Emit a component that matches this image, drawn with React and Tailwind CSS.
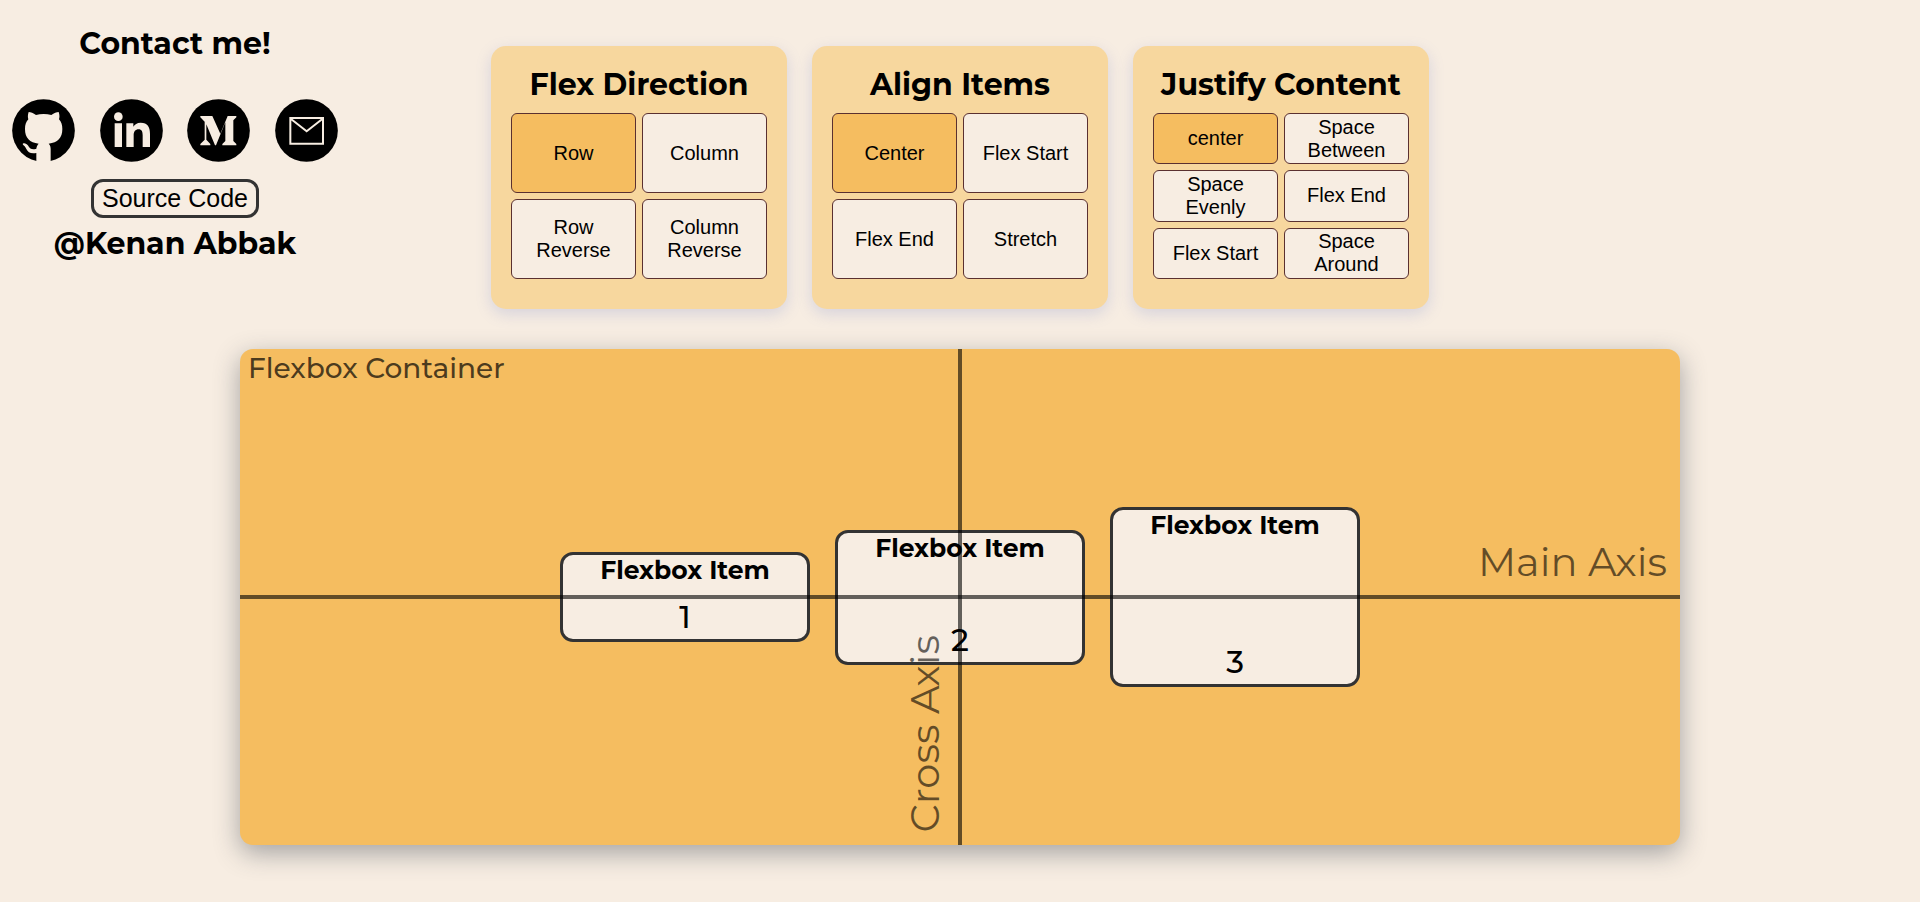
import { useState } from "react";

const groups = [
  { title: "Flex Direction", options: ["Row", "Column", "Row Reverse", "Column Reverse"] },
  { title: "Align Items", options: ["Center", "Flex Start", "Flex End", "Stretch"] },
  {
    title: "Justify Content",
    options: ["center", "Space Between", "Space Evenly", "Flex End", "Flex Start", "Space Around"],
  },
];

const items = [
  { id: 1, height: "h-[90px]" },
  { id: 2, height: "h-[135px]" },
  { id: 3, height: "h-[180px]" },
];

const contacts = [
  {
    name: "GitHub",
    href: "#github",
    icon: (
      <path
        fill="#f7ede2"
        d="M50 39c6 0 14 4 22 9 14-4 32-4 46 0 8-5 16-9 22-9 3 8 3 15 1 22 7 8 10 17 10 29 0 27-14 41-41 44 5 5 6 10 6 16v42H73v-30c-17 3-25-2-30-12-3-7-7-11-10-13-2-3 0-5 4-4 7 1 10 5 14 11 5 7 12 8 22 5 1-6 3-11 7-15-27-3-41-17-41-44 0-12 3-21 10-29-2-7-2-14 1-22z"
      />
    ),
  },
  {
    name: "LinkedIn",
    href: "#linkedin",
    icon: (
      <g fill="#f7ede2">
        <circle cx="55" cy="53" r="13" />
        <path d="M44 73h22v71H44zM79 73h21v10c4-7 11-12 22-12 21 0 28 13 28 34v39h-22v-35c0-11-3-18-12-18-10 0-15 7-15 18v35H79z" />
      </g>
    ),
  },
  {
    name: "Medium",
    href: "#medium",
    icon: (
      <path
        fill="#f7ede2"
        d="M40 51h36l24 53 22-53h26v4l-9 9v62l9 9v4h-42v-4l9-9V70l-28 69h-3L58 76v46l12 13v4H40v-4l13-13V68L40 55z"
      />
    ),
  },
  {
    name: "Email",
    href: "#email",
    icon: <path fill="none" stroke="#f7ede2" strokeWidth="6" d="M46 57h98v77H46zM48 60l47 37 47-37" />,
  },
];

function OptionGroup({ title, options }) {
  const [active, setActive] = useState(0);
  return (
    <section className="flex h-[263px] w-[296px] flex-col rounded-[15px] bg-[#f7d79e] px-5 pt-[17px] pb-[30px] shadow-[0_5px_15px_rgba(100,120,200,0.22)]">
      <h2 className="mb-[6px] text-center text-[30px] leading-[44px] font-bold">{title}</h2>
      <div className="grid flex-1 auto-rows-fr grid-cols-2 gap-[6px]">
        {options.map((o, i) => (
          <button
            key={o}
            type="button"
            aria-pressed={i === active}
            onClick={() => setActive(i)}
            className={`rounded-md border border-[#5a3030] px-3 font-['Liberation_Sans',sans-serif] text-[20px] leading-[23px] ${i === active ? "bg-[#f5bd60]" : "bg-[#f7ede2]"}`}
          >
            {o}
          </button>
        ))}
      </div>
    </section>
  );
}

export default function App() {
  return (
    <div className="min-h-screen bg-[#f7ede2] pb-[57px] font-['Montserrat','Inter',sans-serif] text-black">
      <header className="grid grid-cols-[350px_1fr_350px] items-start pb-10">
        <div className="flex flex-col items-center pt-[25px]">
          <h2 className="text-[30px] leading-[38px] font-bold">Contact me!</h2>
          <nav className="mt-9 flex w-full justify-around">
            {contacts.map((c) => (
              <a key={c.name} href={c.href} aria-label={c.name} className="size-[63px]">
                <svg viewBox="0 0 189 189" className="size-full" aria-hidden="true">
                  <circle cx="94.5" cy="94.5" r="94" />
                  {c.icon}
                </svg>
              </a>
            ))}
          </nav>
          <a href="#source" className="mt-[17px] rounded-xl border-[3px] border-[#333] px-2 font-['Liberation_Sans',sans-serif] text-[25px] leading-[33px]">Source Code</a>
          <h2 className="mt-[7px] text-[30px] leading-[38px] font-bold">@Kenan Abbak</h2>
        </div>
        <div className="flex justify-center gap-[25px] pt-[46px]">
          {groups.map((g) => (
            <OptionGroup key={g.title} {...g} />
          ))}
        </div>
      </header>

      <main className="relative mx-auto flex h-[55vh] w-3/4 items-center justify-center gap-[25px] rounded-[13px] bg-[#f5bd60] shadow-[0_8px_26px_rgba(50,60,75,0.42)]">
        <h1 className="absolute top-0 left-2 text-[28px] leading-[38px] font-medium text-black/70">Flexbox Container</h1>
        {items.map((item) => (
          <div key={item.id} className={`flex w-[250px] flex-col items-center justify-between rounded-[13px] border-[3px] border-[#333] bg-[#f7ede2] ${item.height}`}>
            <h3 className="text-[25px] leading-[30px] font-bold">Flexbox Item</h3>
            <p className="text-[31px] leading-[44px] font-medium">{item.id}</p>
          </div>
        ))}
        <div className="absolute inset-x-0 top-1/2 flex h-1 -translate-y-1/2 items-end justify-end bg-black/60">
          <span className="mr-[13px] mb-[13px] text-[40px] leading-[48px] text-black/60">Main Axis</span>
        </div>
        <div className="absolute inset-y-0 left-1/2 flex w-1 -translate-x-1/2 items-end justify-end bg-black/60">
          <span className="mr-[13px] mb-[13px] rotate-180 text-[40px] leading-[48px] whitespace-nowrap text-black/60 [writing-mode:vertical-rl]">Cross Axis</span>
        </div>
      </main>
    </div>
  );
}
